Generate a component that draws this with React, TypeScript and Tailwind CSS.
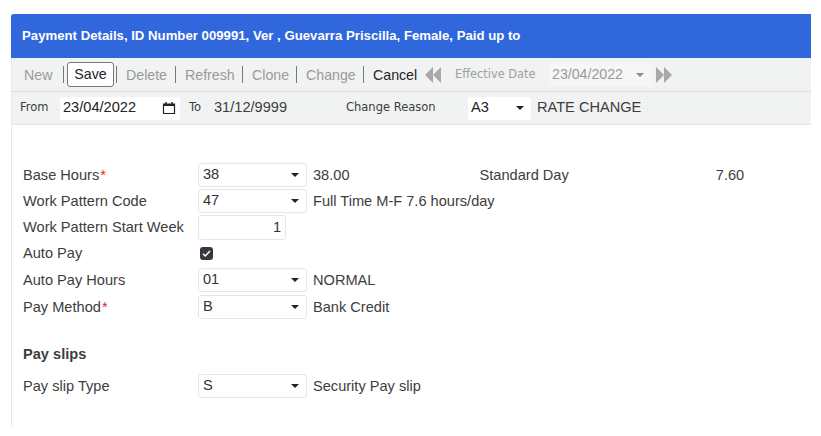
import React from 'react';

const Caret: React.FC<{ muted?: boolean }> = ({ muted }) => (
  <svg width="8" height="4" viewBox="0 0 8 4" className={muted ? 'text-[#8a8a8a]' : 'text-[#222]'}>
    <path d="M0 0h8L4 4z" fill="currentColor" />
  </svg>
);

const Sep = () => <span className="ml-[8px] mr-[9px] h-[17px] w-px bg-[#777]" />;

const ToolItem: React.FC<{ label: string; active?: boolean; width: string }> = ({ label, active, width }) => (
  <span className={`${width} mt-[2px] ${active ? 'text-[#212529]' : 'text-[#9a9a9a]'}`}>{label}</span>
);

const Select: React.FC<{ value: string }> = ({ value }) => (
  <div className="flex h-[24px] w-[109px] shrink-0 items-center justify-between rounded-[3px] border border-[#e6e6e6] bg-white pl-[4px] pr-[7px] text-[14.6px] leading-none text-[#333]">
    <span className="-mt-[2px]">{value}</span>
    <Caret />
  </div>
);

const Row: React.FC<{ label: string; required?: boolean; children?: React.ReactNode; className?: string }> = ({
  label,
  required,
  children,
  className = 'h-[24px] mb-[2px]',
}) => (
  <div className={`flex items-center ${className}`}>
    <label className="mt-[1px] w-[175px] shrink-0 text-[14.6px] text-[#3d3d3d]">
      {label}
      {required && <span className="ml-[1px] text-[#ee2222]">*</span>}
    </label>
    {children}
  </div>
);

const Desc: React.FC<{ children: React.ReactNode }> = ({ children }) => (
  <span className="ml-[6px] mt-[1px] text-[14.6px] text-[#3d3d3d]">{children}</span>
);

export default function App() {
  return (
    <div className="h-[436px] w-[821px] bg-white pl-[11px] pt-[14px] font-['Liberation_Sans',Arial,sans-serif]">
      <div className="h-[412px] w-[800px] border-l border-[#e8e8e8]">
        <div className="-ml-px flex h-[44px] items-center rounded-tl-[3px] bg-[#3067dc] pl-[11px] text-[13.2px] font-bold text-white">
          Payment Details, ID Number 009991, Ver , Guevarra Priscilla, Female, Paid up to
        </div>

        {/* Toolbar */}
        <div className="flex h-[34px] items-center border-b border-[#dcdcdc] bg-[#f1f2f2] pl-[12px] text-[14.2px]">
          <ToolItem label="New" width="w-[28px]" />
          <span className="ml-[11px] h-[17px] w-px bg-[#777]" />
          <button className="ml-[3px] h-[25px] w-[47px] rounded-[3px] border border-[#777] bg-white text-[#212529]">Save</button>
          <span className="ml-[2px] mr-[9px] h-[17px] w-px bg-[#777]" />
          <ToolItem label="Delete" width="w-[41px]" />
          <Sep />
          <ToolItem label="Refresh" width="w-[49px]" />
          <Sep />
          <ToolItem label="Clone" width="w-[36px]" />
          <Sep />
          <ToolItem label="Change" width="w-[49px]" />
          <Sep />
          <ToolItem label="Cancel" width="w-[43px]" active />
          <svg width="16" height="16" viewBox="0 0 16 16" className="ml-[9px] text-[#a8a8a8]">
            <path d="M8 0v16L0 8zM16 0v16L8 8z" fill="currentColor" />
          </svg>
          <span className="ml-[14px] w-[80px] whitespace-nowrap font-['DejaVu_Sans',sans-serif] text-[11.4px] text-[#a0a0a0]">Effective Date</span>
          <div className="ml-[14px] flex h-[23px] w-[103px] items-center justify-between rounded-[3px] bg-[#f6f6f6] pl-[3px] pr-[8px] text-[#9a9a9a]">
            23/04/2022
            <Caret muted />
          </div>
          <svg width="16" height="16" viewBox="0 0 16 16" className="ml-[4px] text-[#a8a8a8]">
            <path d="M0 0v16l8-8zM8 0v16l8-8z" fill="currentColor" />
          </svg>
        </div>

        {/* Effective range */}
        <div className="flex h-[33px] items-center border-b border-[#e4e4e4] bg-[#f1f2f2] pl-[8px] text-[#3d3d3d]">
          <span className="w-[30px] font-['DejaVu_Sans',sans-serif] text-[11.5px]">From</span>
          <div className="ml-[10px] flex h-[23px] w-[120px] items-center justify-between rounded-[3px] bg-white pl-[3px] pr-[4px] text-[14.6px] text-[#222]">
            23/04/2022
            <svg width="14" height="14" viewBox="0 0 14 14" fill="none" stroke="#222">
              <path d="M1.5 3h11v9.5h-11z" strokeWidth="1.2" />
              <path d="M1.5 4h11" strokeWidth="2" />
              <path d="M4 1v2M10 1v2" strokeWidth="1.4" />
            </svg>
          </div>
          <span className="ml-[9px] w-[25px] font-['DejaVu_Sans',sans-serif] text-[11.5px]">To</span>
          <span className="w-[73px] text-[14.6px]">31/12/9999</span>
          <span className="ml-[59px] w-[122px] font-['DejaVu_Sans',sans-serif] text-[11.5px]">Change Reason</span>
          <div className="flex h-[23px] w-[63px] items-center justify-between rounded-[3px] bg-white pl-[3px] pr-[7px] text-[14.6px] text-[#222]">
            A3
            <Caret />
          </div>
          <span className="ml-[6px] text-[14.6px]">RATE CHANGE</span>
        </div>

        {/* Form */}
        <div className="pl-[11px] pt-[38px]">
          <Row label="Base Hours" required>
            <Select value="38" />
            <Desc>38.00</Desc>
            <span className="ml-[130px] mt-[1px] text-[14.6px] text-[#3d3d3d]">Standard Day</span>
            <span className="ml-[147px] mt-[1px] text-[14.6px] text-[#3d3d3d]">7.60</span>
          </Row>
          <Row label="Work Pattern Code">
            <Select value="47" />
            <Desc>Full Time M-F 7.6 hours/day</Desc>
          </Row>
          <Row label="Work Pattern Start Week" className="h-[25px] mb-[1px]">
            <div className="flex h-[25px] w-[88px] items-center justify-end rounded-[3px] border border-[#e6e6e6] bg-white pr-[4px] text-[14.6px] text-[#333]">
              1
            </div>
          </Row>
          <Row label="Auto Pay" className="h-[24px] mb-[3px]">
            <div className="ml-[2px] flex h-[13px] w-[13px] items-center justify-center rounded-[3px] bg-[#343a40]">
              <svg width="9" height="9" viewBox="0 0 9 9" fill="none" stroke="white" strokeWidth="1.5">
                <path d="M1 4.8l2.2 2.2L8 2" />
              </svg>
            </div>
          </Row>
          <Row label="Auto Pay Hours" className="h-[24px] mb-[3px]">
            <Select value="01" />
            <Desc>NORMAL</Desc>
          </Row>
          <Row label="Pay Method" required>
            <Select value="B" />
            <Desc>Bank Credit</Desc>
          </Row>
          <h3 className="mt-[25px] h-[30px] text-[14.6px] font-bold leading-[20px] text-[#3d3d3d]">Pay slips</h3>
          <Row label="Pay slip Type">
            <Select value="S" />
            <Desc>Security Pay slip</Desc>
          </Row>
        </div>
      </div>
    </div>
  );
}
